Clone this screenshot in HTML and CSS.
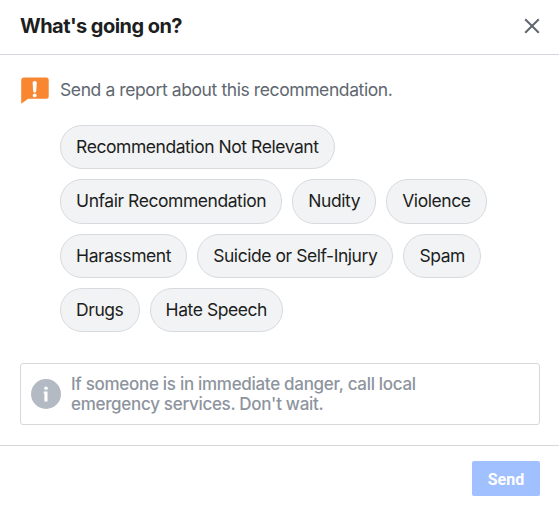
FILE: index.html
```html
<!DOCTYPE html>
<html lang="en">
<head>
<meta charset="utf-8">
<title>What's going on?</title>
<link rel="stylesheet" href="styles.css">
</head>
<body>
<main class="dialog">
  <header class="header">
    <h1 class="title">What's going on?</h1>
    <button class="close" aria-label="Close"><svg width="16" height="16" viewBox="0 0 16 16"><path d="M1.2 1.2 14.8 14.8M14.8 1.2 1.2 14.8" fill="none" stroke="#606770" stroke-width="2"/></svg></button>
  </header>
  <section class="content">
    <div class="prompt">
      <svg class="report-icon" width="28" height="27" viewBox="0 0 28 27"><path d="M2.5.5h22.7Q27.7.5 27.7 3v16.3q0 2.5-2.5 2.5H7.2L.2 26.8V3Q.2.5 2.5.5Z" fill="#f98732"/><path d="M11.6 5.4q0-1.5 2.1-1.5t2.1 1.5l-.6 8.8q0 1.2-1.5 1.2t-1.5-1.2Z" fill="#fff"/><circle cx="13.7" cy="18.4" r="1.9" fill="#fff"/></svg>
      <p class="prompt-text">Send a report about this recommendation.</p>
    </div>
    <div class="choices">
      <div class="row"><button class="chip">Recommendation Not Relevant</button></div>
      <div class="row"><button class="chip">Unfair Recommendation</button><button class="chip">Nudity</button><button class="chip">Violence</button></div>
      <div class="row"><button class="chip">Harassment</button><button class="chip">Suicide or Self-Injury</button><button class="chip">Spam</button></div>
      <div class="row"><button class="chip">Drugs</button><button class="chip">Hate Speech</button></div>
    </div>
    <aside class="notice">
      <svg class="info-icon" width="30" height="30" viewBox="0 0 30 30"><circle cx="15" cy="15" r="15" fill="#b4bac4"/><circle cx="15" cy="9.3" r="1.8" fill="#fff"/><path d="M12.7 12.6h3.8v10h-3.1v-8.1h-.7Z" fill="#fff"/></svg>
      <p class="notice-text">If someone is in immediate danger, call local<br>emergency services. Don't wait.</p>
    </aside>
  </section>
  <footer class="footer"><button class="send">Send</button></footer>
</main>
</body>
</html>
```
FILE: styles.css
```css
* { box-sizing: border-box; }
body { margin: 0; background: #fff; font-family: Inter, "Liberation Sans", sans-serif; }
button { font: inherit; margin: 0; }
h1, p { margin: 0; }
.dialog { width: 559px; height: 507px; overflow: hidden; }
.header { height: 55px; display: flex; justify-content: space-between; padding: 0 19px 0 20px; border-bottom: 1px solid #d3d6dc; }
.title { font-size: 20px; line-height: 24px; padding-top: 14px; font-weight: 700; letter-spacing: -.55px; color: #1c1e21; white-space: nowrap; }
.close { width: 16px; height: 16px; margin-top: 18px; padding: 0; border: 0; background: none; }
.close svg { display: block; }
.content { height: 390px; padding: 22px 19px 0 20px; }
.prompt { display: flex; height: 48px; }
.report-icon { margin: 0 11px 0 1px; flex: none; }
.prompt-text { font-size: 17.5px; line-height: 26px; letter-spacing: -.4px; color: #606770; white-space: nowrap; }
.choices { padding-left: 40px; display: grid; gap: 10.2px; }
.row { display: flex; gap: 10px; height: 44.2px; }
.chip { height: 44.2px; padding: 0 15.1px; border: 1px solid #d8dade; border-radius: 22px; background: #f2f3f5; color: #1c1e21; font-size: 17.5px; line-height: 42px; letter-spacing: -.445px; white-space: nowrap; }
.notice { display: flex; align-items: center; height: 62px; margin-top: 30.6px; padding: 0 10px; border: 1px solid #d6d8db; border-radius: 3px; }
.info-icon { flex: none; margin-right: 10px; }
.notice-text { font-size: 17px; font-weight: 450; line-height: 20px; letter-spacing: -.3px; color: #8d949e; white-space: nowrap; }
.footer { border-top: 1px solid #d6d8db; height: 62px; display: flex; justify-content: flex-end; padding: 15px 19px 0 0; }
.send { width: 68px; height: 35px; padding: 1px 0 0; border: 0; border-radius: 2px; background: #a0c0ff; color: #fff; font: bold 16px/35px Roboto, "Liberation Sans", sans-serif; }
```
